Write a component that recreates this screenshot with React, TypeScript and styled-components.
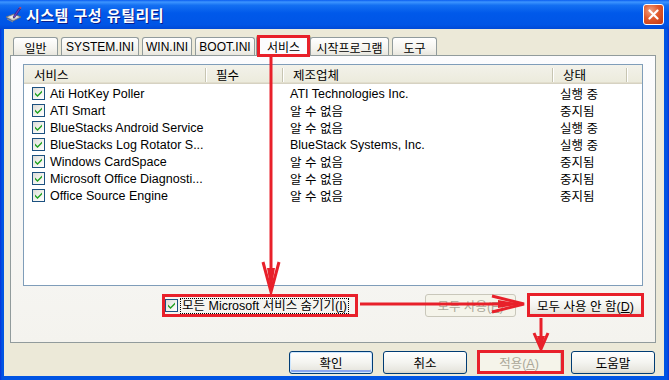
import React from 'react';
import styled, { createGlobalStyle } from 'styled-components';

const GlobalStyle = createGlobalStyle`
  html, body {
    margin: 0;
    padding: 0;
    background: #0054e3;
  }
  body {
    font-family: "Liberation Sans", "Noto Sans CJK KR", sans-serif;
    font-size: 12px;
    color: #000;
  }
`;

const FONT = `"Liberation Sans", "Noto Sans CJK KR", sans-serif`;
const COLS = '182px 77px 270px 74px 1fr';

const Window = styled.div`
  position: relative;
  width: 669px;
  height: 380px;
  display: flex;
  flex-direction: column;
  background: linear-gradient(to right, #0831d9 0, #0054e3 2px, #0054e3 calc(100% - 2px), #0831d9 100%);
  overflow: hidden;
`;

const TitleBar = styled.div`
  height: 29px;
  flex: none;
  display: flex;
  align-items: center;
  justify-content: space-between;
  padding: 0 5px 0 5px;
  background: linear-gradient(
    to bottom,
    #0a5df0 0%,
    #3d95ff 7%,
    #1470f2 18%,
    #0059ea 45%,
    #0055e6 85%,
    #0049d6 100%
  );
`;

const TitleLeft = styled.div`
  display: flex;
  align-items: center;
  gap: 4px;
`;

const TitleText = styled.span`
  color: #fff;
  font-family: ${FONT};
  font-weight: bold;
  font-size: 15px;
  letter-spacing: 0.5px;
  text-shadow: 1px 1px 0 #0a1e8c;
`;

const CloseButton = styled.div`
  width: 21px;
  height: 21px;
  box-sizing: border-box;
  border: 1px solid #fff;
  border-radius: 3px;
  background: radial-gradient(circle at 35% 30%, #f0a080 0%, #e0592c 45%, #c33712 100%);
  display: flex;
  align-items: center;
  justify-content: center;
`;

const Body = styled.div`
  flex: 1;
  margin: 0 5px 4px 4px;
  background: #ece9d8;
  padding: 6px 8px 0 6px;
  display: flex;
  flex-direction: column;
`;

const TabStrip = styled.div`
  height: 21px;
  display: flex;
  align-items: flex-end;
  padding-left: 3px;
  margin-bottom: -1px;
`;

const Tab = styled.div<{ $active?: boolean; $w: number }>`
  position: relative;
  width: ${(p) => p.$w}px;
  height: ${(p) => (p.$active ? 21 : 19)}px;
  box-sizing: border-box;
  margin: ${(p) => (p.$active ? '0 -1px 0 -2px' : '0 3px 0 0')};
  z-index: ${(p) => (p.$active ? 2 : 0)};
  border: 1px solid #919b9c;
  border-bottom: none;
  border-radius: 3px 3px 0 0;
  background: ${(p) =>
    p.$active
      ? '#fcfcfe'
      : 'linear-gradient(to bottom, #ffffff 0%, #f4f3ee 60%, #e6e4dc 100%)'};
  border-top: ${(p) => (p.$active ? '3px solid #ffc83c' : '1px solid #919b9c')};
  display: flex;
  align-items: center;
  justify-content: center;
  font-size: 12px;
  padding-bottom: ${(p) => (p.$active ? 1 : 0)}px;
`;

const Panel = styled.div`
  position: relative;
  z-index: 1;
  height: 288px;
  box-sizing: border-box;
  border: 1px solid #919b9c;
  background: linear-gradient(to bottom, #fcfcfe 0%, #f4f3ee 100%);
  padding: 8px 12px;
  display: flex;
  flex-direction: column;
`;

const ListView = styled.div`
  height: 222px;
  box-sizing: border-box;
  border: 1px solid #7f9db9;
  background: #fff;
  display: flex;
  flex-direction: column;
`;

const HeaderRow = styled.div`
  display: grid;
  grid-template-columns: ${COLS};
  height: 19px;
  flex: none;
  background: linear-gradient(to bottom, #f3f2ea 0%, #ebeadb 100%);
  box-shadow: inset 0 -1px #d6d2c2, inset 0 -2px #e2decd;
`;

const HeaderCell = styled.div<{ $sep?: boolean }>`
  position: relative;
  display: flex;
  align-items: center;
  padding-left: 10px;
  padding-bottom: 2px;
  font-size: 12.5px;
  white-space: nowrap;
  &::after {
    content: '';
    display: ${(p) => (p.$sep ? 'block' : 'none')};
    position: absolute;
    right: 0;
    top: 3px;
    bottom: 4px;
    width: 1px;
    background: #c7c5b2;
    box-shadow: 1px 0 #fff;
  }
`;

const Row = styled.div`
  display: grid;
  grid-template-columns: ${COLS};
  height: 17px;
  align-items: center;
  font-size: 12.5px;
  white-space: nowrap;
`;

const NameCell = styled.div`
  display: flex;
  align-items: center;
  gap: 5px;
  padding-left: 8px;
`;

const Cell = styled.div`
  padding-left: 7px;
`;

const CheckBox = styled.span`
  width: 13px;
  height: 13px;
  box-sizing: border-box;
  flex: none;
  border: 1px solid #1c5180;
  background: linear-gradient(135deg, #dcdcd7 0%, #f3f3ef 55%, #ffffff 100%);
  display: inline-flex;
  align-items: center;
  justify-content: center;
`;

const Controls = styled.div`
  margin-top: 8px;
  height: 23px;
  display: flex;
  align-items: center;
  justify-content: space-between;
  padding-left: 142px;
`;

const CheckLabel = styled.label`
  display: flex;
  align-items: center;
  gap: 2px;
  font-size: 12.5px;
`;

const FocusText = styled.span`
  border: 1px dotted #000;
  padding: 0 1px;
  line-height: 14px;
`;

const ButtonGroup = styled.div<{ $gap: number }>`
  display: flex;
  align-items: center;
  gap: ${(p) => p.$gap}px;
`;

const Button = styled.button<{ $w: number; $default?: boolean }>`
  width: ${(p) => p.$w}px;
  height: 23px;
  box-sizing: border-box;
  padding: 0;
  font-family: ${FONT};
  font-size: 12.5px;
  color: #000;
  border: 1px solid #003c74;
  border-radius: 3px;
  background: linear-gradient(to bottom, #ffffff 0%, #f4f4f0 50%, #e8e7e0 85%, #d8d2c6 100%);
  box-shadow: ${(p) =>
    p.$default ? 'inset 0 0 0 1px #cee7ff, inset 0 -2px 0 1px #8aa6ee' : 'none'};
  &:disabled {
    color: #aca899;
    border-color: #c9c7ba;
    background: #f5f4ea;
  }
`;

const ButtonBar = styled.div`
  margin-top: 8px;
  display: flex;
  justify-content: flex-end;
  gap: 10px;
  padding-right: 1px;
`;

const Annotations = styled.svg`
  position: absolute;
  left: 0;
  top: 0;
  width: 669px;
  height: 380px;
  pointer-events: none;
  z-index: 5;
`;

const Check = () => (
  <svg width="7" height="7" viewBox="0 0 7 7">
    <path d="M0 2.5 L2.5 5 L7 0.5 L7 2.5 L2.5 7 L0 4.5 Z" fill="#21a121" />
  </svg>
);

const AppIcon = () => (
  <svg width="17" height="17" viewBox="0 0 17 17">
    <path d="M1 11 L9 8 L16 11 L8 15 Z" fill="#c9c9c9" stroke="#6b6b6b" strokeWidth="0.8" />
    <path d="M2 12.5 L8 15.5 L8 16.5 L2 13.5 Z" fill="#8c8c8c" />
    <path d="M4 11 L9 9.3 L13 11 L8 13 Z" fill="#f2f2f2" />
    <path d="M8 11 L14 2 L15.5 3 L9.5 12 Z" fill="#6a3fc0" stroke="#2d1a6e" strokeWidth="0.6" />
    <path d="M14 2 L15 0.8 L16.5 1.8 L15.5 3 Z" fill="#e04040" />
    <path d="M8 11 L9.5 12 L7.8 12.6 Z" fill="#333" />
  </svg>
);

const services = [
  { name: 'Ati HotKey Poller', maker: 'ATI Technologies Inc.', state: '실행 중' },
  { name: 'ATI Smart', maker: '알 수 없음', state: '중지됨' },
  { name: 'BlueStacks Android Service', maker: '알 수 없음', state: '실행 중' },
  { name: 'BlueStacks Log Rotator S...', maker: 'BlueStack Systems, Inc.', state: '실행 중' },
  { name: 'Windows CardSpace', maker: '알 수 없음', state: '중지됨' },
  { name: 'Microsoft Office Diagnosti...', maker: '알 수 없음', state: '중지됨' },
  { name: 'Office Source Engine', maker: '알 수 없음', state: '중지됨' },
];

const tabs = [
  { label: '일반', w: 45 },
  { label: 'SYSTEM.INI', w: 78 },
  { label: 'WIN.INI', w: 50 },
  { label: 'BOOT.INI', w: 60 },
  { label: '서비스', w: 55, active: true },
  { label: '시작프로그램', w: 79 },
  { label: '도구', w: 45 },
];

const RED = '#e8202a';

const App = () => {
  return (
    <>
      <GlobalStyle />
      <Window>
        <TitleBar>
          <TitleLeft>
            <AppIcon />
            <TitleText>시스템 구성 유틸리티</TitleText>
          </TitleLeft>
          <CloseButton>
            <svg width="11" height="11" viewBox="0 0 11 11">
              <path d="M1.5 1.5 L9.5 9.5 M9.5 1.5 L1.5 9.5" stroke="#fff" strokeWidth="2.2" strokeLinecap="round" />
            </svg>
          </CloseButton>
        </TitleBar>

        <Body>
          <TabStrip>
            {tabs.map((t) => (
              <Tab key={t.label} $w={t.w} $active={t.active}>
                {t.label}
              </Tab>
            ))}
          </TabStrip>

          <Panel>
            <ListView>
              <HeaderRow>
                <HeaderCell $sep>서비스</HeaderCell>
                <HeaderCell $sep>필수</HeaderCell>
                <HeaderCell $sep>제조업체</HeaderCell>
                <HeaderCell $sep>상태</HeaderCell>
                <HeaderCell />
              </HeaderRow>
              {services.map((s) => (
                <Row key={s.name}>
                  <NameCell>
                    <CheckBox>
                      <Check />
                    </CheckBox>
                    {s.name}
                  </NameCell>
                  <Cell />
                  <Cell>{s.maker}</Cell>
                  <Cell>{s.state}</Cell>
                  <Cell />
                </Row>
              ))}
            </ListView>

            <Controls>
              <CheckLabel>
                <CheckBox>
                  <Check />
                </CheckBox>
                <FocusText>
                  모든 Microsoft 서비스 숨기기(<u>I</u>)
                </FocusText>
              </CheckLabel>
              <ButtonGroup $gap={12}>
                <Button $w={91} disabled>
                  모두 사용(<u>E</u>)
                </Button>
                <Button $w={115}>
                  모두 사용 안 함(<u>D</u>)
                </Button>
              </ButtonGroup>
            </Controls>
          </Panel>

          <ButtonBar>
            <Button $w={84} $default>
              확인
            </Button>
            <Button $w={84}>취소</Button>
            <Button $w={84} disabled>
              적용(<u>A</u>)
            </Button>
            <Button $w={84}>도움말</Button>
          </ButtonBar>
        </Body>

        <Annotations viewBox="0 0 669 380">
          <g fill="none" stroke={RED} strokeWidth={3}>
            <rect x={258.5} y={36.5} width={50} height={19} />
            <rect x={163.5} y={295.5} width={193} height={20} />
            <rect x={528.5} y={294.5} width={114} height={21} />
            <rect x={478.5} y={351.5} width={84} height={21} />
            <line x1={271} y1={57} x2={271} y2={288} />
            <path d="M263 262 L271 292 L279 262" />
            <line x1={360} y1={304} x2={518} y2={304} />
            <path d="M492 296 L524 304 L492 312" />
            <line x1={541} y1={318} x2={541} y2={345} />
            <path d="M534 333 L541 349 L548 333" />
          </g>
          <g fill={RED}>
            <polygon points="267,268 271,291 275,268" />
            <polygon points="498,300 522,304 498,308" />
            <polygon points="537,336 541,348 545,336" />
          </g>
        </Annotations>
      </Window>
    </>
  );
};

export default App;
